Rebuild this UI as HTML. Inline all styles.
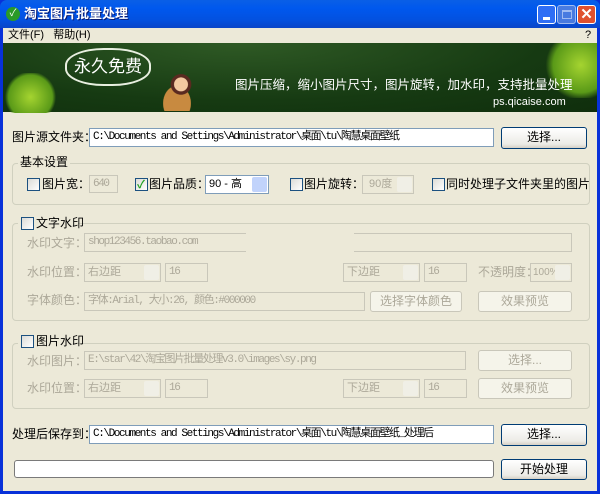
<!DOCTYPE html><html><head><meta charset="utf-8"><style>
*{box-sizing:border-box;margin:0;padding:0}
body{width:600px;height:494px;overflow:hidden;background:#0831d9;font-family:"Liberation Sans","Noto Sans CJK SC",sans-serif;font-size:12px;color:#000;position:relative}
.a{position:absolute}
#win{position:absolute;left:3px;top:28px;width:594px;height:463px;background:#ece9d8}
.t{position:absolute;white-space:nowrap;line-height:14px}
.g{color:#aca899}
.in{position:absolute;background:#fff;border:1px solid #7f9db9;font-family:"Liberation Mono","Noto Sans CJK SC",monospace;font-size:11px;letter-spacing:-1.4px;padding:2px 3px;white-space:nowrap;overflow:hidden;line-height:13px}
.dis{background:#ece9d8;border-color:#c9c7ba;color:#aca899}
.btn{position:absolute;border:1px solid #003c74;border-radius:3px;background:linear-gradient(#fff,#ecebe6 80%,#d6d0c5);text-align:center;line-height:19px}
.btn.dis{border-color:#c9c7ba;background:#f5f4ea;color:#aca899}
.cb{position:absolute;width:13px;height:13px;border:1px solid #1c5180;background:linear-gradient(135deg,#dcdcd7,#fff)}
.grp{position:absolute;border:1px solid #d0d0bf;border-radius:4px}
.sel{position:absolute;border:1px solid #7f9db9;background:#fff;padding:1px 3px;line-height:15px;font-size:11px;white-space:nowrap;overflow:hidden}
.sel::after{content:"";position:absolute;right:1px;top:1px;width:15px;bottom:1px;background:#c1d3fb;border-radius:2px}
.sel.dis{border-color:#c9c7ba;background:#ece9d8;color:#aca899}
.sel.dis::after{background:#f0efe6}
</style></head><body>
<div class="a" style="left:0;top:0;width:600px;height:28px;background:linear-gradient(#0a5fe6,#0058ee 30%,#0351e0 70%,#0a45c8);border-radius:7px 7px 0 0"></div>
<div class="a" style="left:6px;top:7px;width:14px;height:14px;border-radius:7px;background:#2a9a28;color:#fff;font-size:10px;text-align:center;line-height:14px">✓</div>
<div class="t" style="left:24px;top:6px;color:#fff;font-weight:bold;font-size:13px;line-height:16px;text-shadow:1px 1px #0a1a70">淘宝图片批量处理</div>
<div class="a" style="left:537px;top:5px;width:19px;height:19px;border:1px solid #fff;border-radius:3px;background:#2f6ef5"><div class="a" style="left:5px;top:11px;width:7px;height:3px;background:#fff"></div></div>
<div class="a" style="left:557px;top:5px;width:19px;height:19px;border:1px solid #c8d6f5;border-radius:3px;background:#5a85e0;opacity:.8"><div class="a" style="left:4px;top:4px;width:10px;height:9px;border:1px solid #c8d6f5;border-top-width:2px"></div></div>
<div class="a" style="left:577px;top:5px;width:19px;height:19px;border:1px solid #fff;border-radius:3px;background:#e0512f;color:#fff;font-weight:bold;font-size:15px;text-align:center;line-height:17px">✕</div>
<div id="win">
<div class="t" style="left:5px;top:0;font-size:11px">文件(F)&nbsp;&nbsp;&nbsp;帮助(H)</div>
<div class="t" style="left:582px;top:0;font-size:11px">?</div>
<div class="a" style="left:0;top:15px;width:594px;height:69px;background:radial-gradient(ellipse at 40% 0%,#2f5a25,#163a12 60%,#0f2e0c)">
<div class="a" style="left:0;top:30px;width:55px;height:40px;background:radial-gradient(circle at 50% 60%,#a5d430,#5a9a18 60%,transparent 70%)"></div>
<div class="a" style="left:540px;top:0;width:54px;height:55px;background:radial-gradient(circle at 70% 40%,#a5d430,#5a9a18 55%,transparent 70%)"></div>
<div class="a" style="left:62px;top:5px;width:86px;height:38px;border:2px solid #e8efe0;border-radius:45%;color:#fff;font-size:17px;text-align:center;line-height:33px">永久免费</div>
<div class="a" style="left:158px;top:30px;width:40px;height:38px;background:radial-gradient(circle at 50% 30%,#f3c9a0 20%,#5a2a20 22%,#5a2a20 30%,transparent 32%),radial-gradient(ellipse at 40% 80%,#c88a40 40%,transparent 42%)"></div>
<div class="t" style="left:232px;top:35px;color:#fff;font-size:12.5px">图片压缩，缩小图片尺寸，图片旋转，加水印，支持批量处理</div>
<div class="t" style="left:490px;top:52px;color:#fff;font-size:11px">ps.qicaise.com</div>
</div>
<div class="t" style="left:9px;top:102px">图片源文件夹：</div>
<div class="in" style="left:86px;top:100px;width:405px;height:19px">C:\Documents and Settings\Administrator\桌面\tu\陶慧桌面壁纸</div>
<div class="btn" style="left:498px;top:99px;width:86px;height:22px">选择...</div>
<div class="grp" style="left:9px;top:135px;width:578px;height:42px"></div>
<div class="t" style="left:15px;top:127px;background:#ece9d8;padding:0 2px">基本设置</div>
<div class="cb" style="left:24px;top:150px"></div><div class="t" style="left:39px;top:149px">图片宽：</div>
<div class="in dis" style="left:86px;top:147px;width:29px;height:18px">640</div>
<div class="cb" style="left:132px;top:150px"><span class="a" style="left:1px;top:-3px;color:#21a121;font-size:11px;font-weight:bold">✓</span></div><div class="t" style="left:146px;top:149px">图片品质：</div>
<div class="sel" style="left:202px;top:147px;width:64px;height:19px">90 - 高</div>
<div class="cb" style="left:287px;top:150px"></div><div class="t" style="left:301px;top:149px">图片旋转：</div>
<div class="sel dis" style="left:359px;top:147px;width:52px;height:19px">&nbsp;90度</div>
<div class="cb" style="left:429px;top:150px"></div><div class="t" style="left:443px;top:149px">同时处理子文件夹里的图片</div>
<div class="grp" style="left:9px;top:195px;width:578px;height:98px"></div>
<div class="a" style="left:15px;top:186px;width:60px;height:16px;background:#ece9d8"></div>
<div class="cb" style="left:18px;top:189px"></div><div class="t" style="left:33px;top:188px">文字水印</div>
<div class="t g" style="left:24px;top:208px">水印文字：</div>
<div class="in dis" style="left:81px;top:205px;width:162px;height:19px;border-left-color:#c9c7ba;border-right:none">shop123456.taobao.com</div>
<div class="in dis" style="left:351px;top:205px;width:218px;height:19px;border-left:none"></div>
<div class="t g" style="left:24px;top:237px">水印位置：</div>
<div class="sel dis" style="left:81px;top:235px;width:77px;height:19px">右边距</div>
<div class="in dis" style="left:162px;top:235px;width:43px;height:19px">16</div>
<div class="sel dis" style="left:340px;top:235px;width:77px;height:19px">下边距</div>
<div class="in dis" style="left:421px;top:235px;width:43px;height:19px">16</div>
<div class="t g" style="left:475px;top:237px">不透明度：</div>
<div class="sel dis" style="left:527px;top:235px;width:42px;height:19px;font-size:10px;padding:1px 2px">100%</div>
<div class="t g" style="left:24px;top:265px">字体颜色：</div>
<div class="in dis" style="left:81px;top:264px;width:281px;height:19px">字体:Arial, 大小:26, 颜色:#000000</div>
<div class="btn dis" style="left:367px;top:263px;width:92px;height:21px">选择字体颜色</div>
<div class="btn dis" style="left:475px;top:263px;width:94px;height:21px">效果预览</div>
<div class="grp" style="left:9px;top:315px;width:578px;height:66px"></div>
<div class="a" style="left:15px;top:306px;width:60px;height:16px;background:#ece9d8"></div>
<div class="cb" style="left:18px;top:307px"></div><div class="t" style="left:33px;top:306px">图片水印</div>
<div class="t g" style="left:24px;top:326px">水印图片：</div>
<div class="in dis" style="left:81px;top:323px;width:382px;height:19px">E:\star\42\淘宝图片批量处理v3.0\images\sy.png</div>
<div class="btn dis" style="left:475px;top:322px;width:94px;height:21px">选择...</div>
<div class="t g" style="left:24px;top:353px">水印位置：</div>
<div class="sel dis" style="left:81px;top:351px;width:77px;height:19px">右边距</div>
<div class="in dis" style="left:162px;top:351px;width:43px;height:19px">16</div>
<div class="sel dis" style="left:340px;top:351px;width:77px;height:19px">下边距</div>
<div class="in dis" style="left:421px;top:351px;width:43px;height:19px">16</div>
<div class="btn dis" style="left:475px;top:350px;width:94px;height:21px">效果预览</div>
<div class="t" style="left:9px;top:399px">处理后保存到：</div>
<div class="in" style="left:86px;top:397px;width:405px;height:19px">C:\Documents and Settings\Administrator\桌面\tu\陶慧桌面壁纸_处理后</div>
<div class="btn" style="left:498px;top:396px;width:86px;height:22px">选择...</div>
<div class="a" style="left:11px;top:432px;width:480px;height:18px;border:1px solid #7a7a7a;border-radius:3px;background:#fff"></div>
<div class="btn" style="left:498px;top:431px;width:86px;height:21px">开始处理</div>
</div>
</body></html>
